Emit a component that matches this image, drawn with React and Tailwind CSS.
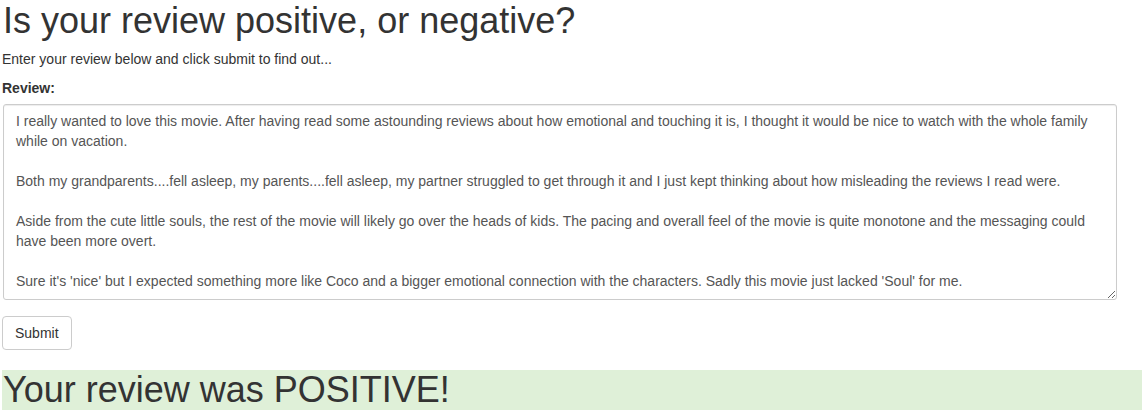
export default function App() {
  const review = `I really wanted to love this movie. After having read some astounding reviews about how emotional and touching it is, I thought it would be nice to watch with the whole family while on vacation.

Both my grandparents....fell asleep, my parents....fell asleep, my partner struggled to get through it and I just kept thinking about how misleading the reviews I read were.

Aside from the cute little souls, the rest of the movie will likely go over the heads of kids. The pacing and overall feel of the movie is quite monotone and the messaging could have been more overt.

Sure it's 'nice' but I expected something more like Coco and a bigger emotional connection with the characters. Sadly this movie just lacked 'Soul' for me.`;

  return (
    <div className="min-h-[413px] bg-white pl-[2px] pr-1 font-['Liberation_Sans',Arial,sans-serif] text-[#333]">
      <h1 className="pt-[1px] text-[36px] leading-[40px] ml-[1px]">Is your review positive, or negative?</h1>
      <p className="mt-[8px] text-[14px] leading-[20px]">Enter your review below and click submit to find out...</p>
      <form className="mt-[9px]" onSubmit={(e) => e.preventDefault()}>
        <label className="block text-[14px] font-bold leading-[20px]">Review:</label>
        <textarea
          className="mt-[6px] ml-[1px] block h-[196px] w-[1114px] rounded-[3px] border border-[#ccc] px-[12px] py-[6px] text-[14px] leading-[20px] text-[#555] shadow-[inset_0_1px_1px_rgba(0,0,0,0.075)] outline-none"
          defaultValue={review}
        />
        <button
          type="submit"
          className="mt-[16px] h-[34px] rounded-[4px] border border-[#ccc] bg-white px-[12px] text-[14px] text-[#333]"
        >
          Submit
        </button>
      </form>
      <div className="mt-[20px] w-[1140px] bg-[#dff0d8] text-[36px] leading-[40px]">
        <span className="ml-[1px]">Your review was POSITIVE!</span>
      </div>
    </div>
  );
}
